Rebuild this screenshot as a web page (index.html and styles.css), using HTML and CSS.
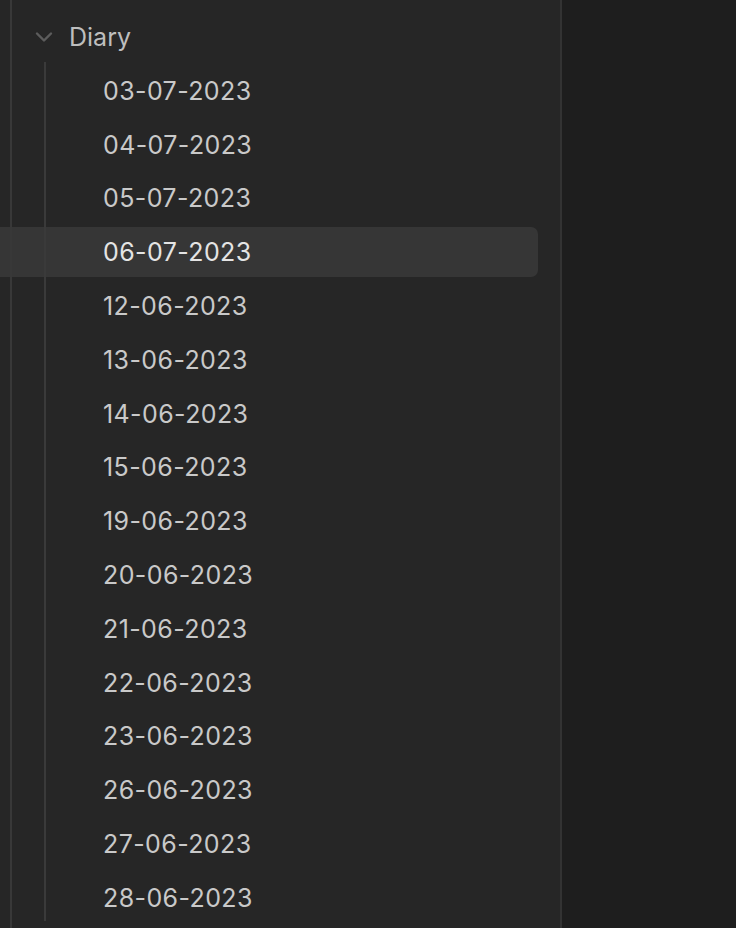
FILE: index.html
```html
<!DOCTYPE html>
<html lang="en">
<head>
	<meta charset="UTF-8">
	<title>Diary</title>
	<link rel="stylesheet" href="styles.css">
</head>
<body>
	<div class="app">
		<div class="sidebar">
			<div class="tree">
				<div class="folder">
					<svg class="chevron" width="18" height="12" viewBox="0 0 18 12"><path d="M2 2.5 L9 9.5 L16 2.5" fill="none" stroke="#5c5c5c" stroke-width="2.4" stroke-linecap="round" stroke-linejoin="round"/></svg>
					<span>Diary</span>
				</div>
				<div class="children">
					<div class="file">03-07-2023</div>
					<div class="file">04-07-2023</div>
					<div class="file">05-07-2023</div>
					<div class="file active">06-07-2023</div>
					<div class="file">12-06-2023</div>
					<div class="file">13-06-2023</div>
					<div class="file">14-06-2023</div>
					<div class="file">15-06-2023</div>
					<div class="file">19-06-2023</div>
					<div class="file">20-06-2023</div>
					<div class="file">21-06-2023</div>
					<div class="file">22-06-2023</div>
					<div class="file">23-06-2023</div>
					<div class="file">26-06-2023</div>
					<div class="file">27-06-2023</div>
					<div class="file">28-06-2023</div>
				</div>
			</div>
		</div>
		<div class="main"></div>
	</div>
</body>
</html>
```

FILE: styles.css
```css
*{
	box-sizing: border-box;
}
html,body{
	margin: 0;
	height: 100%;
	background: #1e1e1e;
	font-family: Inter, "Noto Sans", sans-serif;
	overflow: hidden;
}
.app{
	display: flex;
	height: 928px;
}
.sidebar{
	width: 562px;
	background: #262626;
	border-right: 2px solid #333333;
	position: relative;
	z-index: 0;
}
.tree{
	height: 100%;
	margin-left: 10px;
	border-left: 2px solid #383838;
	padding-top: 12px;
}
.folder{
	display: flex;
	align-items: center;
	height: 50px;
	padding-left: 23px;
	color: #bebebe;
	font-size: 25px;
}
.folder span{
	margin-left: 16px;
}
.chevron{
	display: block;
}
.children{
	margin-left: 32px;
	border-left: 2px solid #3a3a3a;
	padding-top: 2px;
	height: 859px;
}
.file{
	height: 53.8px;
	display: flex;
	align-items: center;
	padding-left: 57px;
	color: #c9c9c9;
	font-size: 25px;
	letter-spacing: 0.4px;
	position: relative;
}
.file.active{
	color: #e4e4e4;
}
.file.active::before{
	content: "";
	position: absolute;
	top: 1.9px;
	bottom: 1.9px;
	left: -46px;
	right: 22px;
	background: #363636;
	border-radius: 0 7px 7px 0;
	z-index: -1;
}
.main{
	flex: 1;
	background: #1e1e1e;
}
```
